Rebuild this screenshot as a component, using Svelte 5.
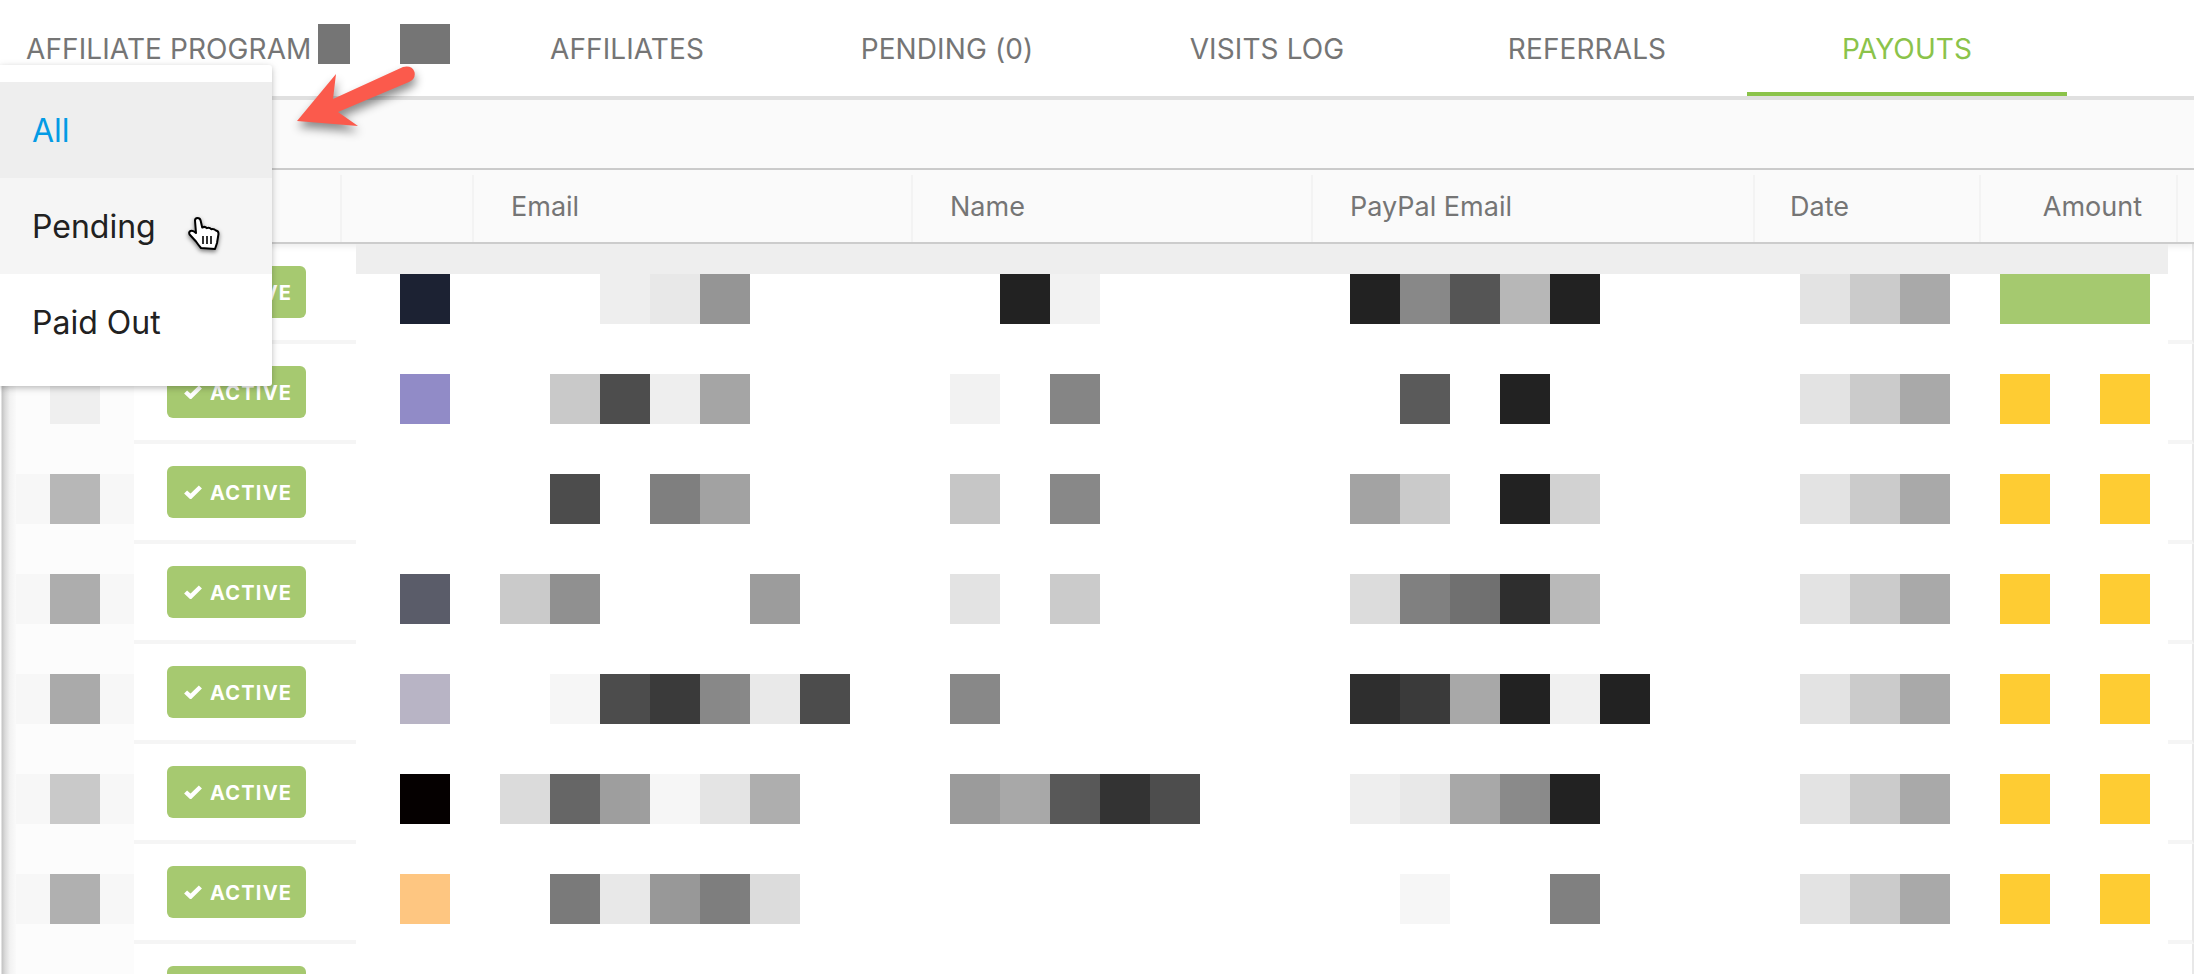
<script>
	const tabs = ['Affiliates', 'Pending (0)', 'Visits Log', 'Referrals', 'Payouts'];
	const columns = [
		{ label: '', width: 342 },
		{ label: '', width: 132 },
		{ label: 'Email', width: 439 },
		{ label: 'Name', width: 400 },
		{ label: 'PayPal Email', width: 442 },
		{ label: 'Date', width: 226, pad: 35 },
		{ label: 'Amount', width: 197, right: true }
	];
	const menu = ['All', 'Pending', 'Paid Out'];

	// redacted cells, keyed by their x on the page
	const rows = [
		{
			left: '#ffffff',
			paid: true,
			cells: {
				400: '#1c2233', 600: '#eeeeee', 650: '#e8e8e8', 700: '#959595',
				1000: '#222222', 1050: '#f2f2f2',
				1350: '#222222', 1400: '#888888', 1450: '#555555', 1500: '#b7b7b7', 1550: '#222222'
			}
		},
		{
			left: '#efefef',
			plain: true,
			cells: {
				400: '#918bc7', 550: '#c9c9c9', 600: '#4d4d4d', 650: '#eeeeee', 700: '#a5a5a5',
				950: '#f2f2f2', 1050: '#858585',
				1400: '#5a5a5a', 1500: '#222222'
			}
		},
		{
			left: '#b7b7b7',
			cells: {
				550: '#4c4c4c', 650: '#7f7f7f', 700: '#a2a2a2',
				950: '#c6c6c6', 1050: '#888888',
				1350: '#a3a3a3', 1400: '#cacaca', 1500: '#222222', 1550: '#d2d2d2'
			}
		},
		{
			left: '#adadad',
			cells: {
				400: '#5a5c69', 500: '#cacaca', 550: '#909090', 750: '#9c9c9c',
				950: '#e3e3e3', 1050: '#cbcbcb',
				1350: '#dcdcdc', 1400: '#808080', 1450: '#707070', 1500: '#2e2e2e', 1550: '#b9b9b9'
			}
		},
		{
			left: '#aaaaaa',
			cells: {
				400: '#b8b4c5', 550: '#f6f6f6', 600: '#4c4c4c', 650: '#3a3a3a', 700: '#888888', 750: '#e9e9e9', 800: '#4c4c4c',
				950: '#888888',
				1350: '#2e2e2e', 1400: '#3a3a3a', 1450: '#a8a8a8', 1500: '#222222', 1550: '#f0f0f0', 1600: '#222222'
			}
		},
		{
			left: '#c9c9c9',
			cells: {
				400: '#050000', 500: '#dbdbdb', 550: '#666666', 600: '#9e9e9e', 650: '#f6f6f6', 700: '#e4e4e4', 750: '#aeaeae',
				950: '#9b9b9b', 1000: '#a8a8a8', 1050: '#585858', 1100: '#333333', 1150: '#4d4d4d',
				1350: '#eeeeee', 1400: '#e8e8e8', 1450: '#a8a8a8', 1500: '#8a8a8a', 1550: '#222222'
			}
		},
		{
			left: '#b0b0b0',
			cells: {
				400: '#fec681', 550: '#7a7a7a', 600: '#e8e8e8', 650: '#989898', 700: '#7e7e7e', 750: '#dcdcdc',
				1400: '#f6f6f6', 1550: '#808080'
			}
		},
		{ left: '#ffffff', empty: true, cells: {} }
	];

	const dates = { 1800: '#e3e3e3', 1850: '#cbcbcb', 1900: '#a9a9a9' };
	const paid = { 2000: '#a5c96f', 2050: '#a5c96f', 2100: '#a5c96f' };
	const unpaid = { 2000: '#fecc33', 2100: '#fecc33' };

	function cellsOf(row) {
		if (row.empty) return [];
		const all = { ...row.cells, ...dates, ...(row.paid ? paid : unpaid) };
		return Object.entries(all).map(([x, color]) => ({ col: (x - 400) / 50 + 1, color }));
	}
</script>

<div class="page">
	<nav class="tabbar">
		<div class="title">
			<span>Affiliate Program</span>
			<i class="chip small"></i>
			<i class="chip wide"></i>
		</div>
		{#each tabs as tab}
			<a class="tab" class:active={tab === 'Payouts'} href="#payouts">{tab}</a>
		{/each}
	</nav>

	<div class="toolbar"></div>

	<div class="thead">
		{#each columns as col}
			<div class="th" class:right={col.right} style="width: {col.width}px; padding-left: {col.pad ?? 37}px">
				{col.label}
			</div>
		{/each}
	</div>

	<div class="tbody">
		<div class="redact-bar"></div>
		{#each rows as row}
			<div class="row">
				<div class="left-col">
					{#if !row.empty}
						<div class="left-strip" class:plain={row.plain}>
							<i style="background: {row.left}"></i>
						</div>
					{/if}
				</div>
				<div class="status">
					<span class="badge">
						<svg width="18" height="14" viewBox="0 0 18 14" aria-hidden="true">
							<polyline points="1.6,7 6.6,11.6 16.4,2" fill="none" stroke="#fff" stroke-width="4.4" />
						</svg>
						<span class="badge-text">Active</span>
					</span>
				</div>
				<div class="blocks">
					{#each cellsOf(row) as cell}
						<i style="grid-column: {cell.col}; background: {cell.color}"></i>
					{/each}
				</div>
				<div class="row-end"></div>
			</div>
		{/each}
	</div>

	<ul class="menu">
		{#each menu as item, i}
			<li class:selected={i === 0} class:hover={i === 1}>{item}</li>
		{/each}
	</ul>

	<svg class="arrow" width="140" height="80" viewBox="290 60 140 80" aria-hidden="true">
		<path
			d="M297 121 L336 74 L333 99 L403 67 Q412 65 414.5 72 Q416 79 409 82 L338 112 L358 126 Z"
			fill="#fb5a4c"
		/>
	</svg>

	<svg class="cursor" width="34" height="36" viewBox="0 0 34 36" aria-hidden="true">
		<path
			d="M7 3.5 Q7 1 9.5 1 Q12 1 12.6 3.5 L14.2 10.5 Q17 9 18.8 11.2 Q21.4 10 23.2 12.2 Q26 11.6 28 13.6 Q30.6 14 30.5 17 L29 26 L27 32 L13 31 Q10 27.5 8 24.5 L1.6 17.5 Q0.4 15 2.6 14 Q5 13 8 16 Z"
			fill="#fff"
			stroke="#000"
			stroke-width="2"
			stroke-linejoin="round"
		/>
		<path d="M15 19 V27 M19 19 V27 M23 19 V27" stroke="#000" stroke-width="1.6" />
	</svg>
</div>

<style>
	:global(body) {
		background: #fff;
		overflow: hidden;
	}

	.page {
		position: relative;
		height: 100vh;
		overflow: hidden;
		font-family: Inter, 'Liberation Sans', sans-serif;
		background: linear-gradient(90deg, #fff 1px, #c4c4c4 2px, #dadada 5px, #f2f2f2 10px, #fafafa 16px);
	}

	.tabbar {
		display: flex;
		height: 96px;
		background: #fff;
		color: #757575;
		font-size: 28px;
		letter-spacing: 0.1px;
		text-transform: uppercase;
	}

	.title {
		display: flex;
		align-items: center;
		width: 467px;
		padding-left: 26px;
		box-sizing: border-box;
	}

	.title span {
		width: 285px;
		flex: none;
		padding-top: 2px;
		white-space: nowrap;
	}

	.chip {
		display: block;
		flex: none;
		height: 40px;
		margin-bottom: 8px;
		background: #757575;
	}

	.chip.small {
		width: 32px;
		margin-left: 7px;
	}

	.chip.wide {
		width: 50px;
		margin-left: 50px;
	}

	.tab {
		display: flex;
		align-items: center;
		justify-content: center;
		width: 320px;
		padding-top: 2px;
		box-sizing: border-box;
		color: inherit;
		text-decoration: none;
	}

	.tab.active {
		color: #8bc34a;
		border-bottom: 4px solid #8bc34a;
		padding-top: 6px;
	}

	.toolbar {
		height: 68px;
		background: #fafafa;
		border-top: 4px solid #e0e0e0;
		border-bottom: 2px solid #cccccc;
	}

	.thead {
		position: relative;
		z-index: 1;
		display: flex;
		height: 72px;
		background: #fafafa;
		border-bottom: 2px solid #cccccc;
		box-shadow: 0 3px 6px rgba(0, 0, 0, 0.07);
		color: #757575;
		font-size: 27px;
	}

	.th {
		display: flex;
		align-items: center;
		padding-bottom: 5px;
		box-sizing: border-box;
		border-right: 2px solid #f3f3f3;
		margin: 5px 0 0;
		white-space: nowrap;
	}

	.th.right {
		justify-content: flex-end;
		padding-right: 34px;
	}

	.tbody {
		position: relative;
	}

	.redact-bar {
		position: absolute;
		z-index: 2;
		top: 0;
		left: 356px;
		width: 1812px;
		height: 30px;
		background: #eeeeee;
	}

	.row {
		display: flex;
		height: 100px;
		padding-left: 16px;
	}

	.left-col {
		width: 118px;
		background: #fcfcfc;
	}

	.left-strip {
		display: flex;
		justify-content: center;
		margin-top: 30px;
		height: 50px;
		background: #f7f7f7;
	}

	.left-strip.plain {
		background: transparent;
	}

	.left-strip i {
		display: block;
		width: 50px;
	}

	.status {
		width: 222px;
		padding: 22px 0 0 33px;
		box-sizing: border-box;
		background: #fff;
		border-bottom: 4px solid #f5f5f5;
	}

	.badge {
		display: flex;
		align-items: center;
		gap: 8px;
		width: 139px;
		height: 52px;
		padding-left: 17px;
		box-sizing: border-box;
		border-radius: 6px;
		background: #a6c970;
		color: #fff;
		font-size: 20px;
		font-weight: 700;
		letter-spacing: 1.2px;
		text-transform: uppercase;
	}

	.badge-text {
		padding-top: 2px;
	}

	.blocks {
		display: grid;
		grid-template-columns: repeat(35, 50px);
		grid-auto-rows: 50px;
		align-content: start;
		width: 1812px;
		padding: 30px 0 0 44px;
		box-sizing: border-box;
		background: #fff;
	}

	.blocks i {
		display: block;
		grid-row: 1;
	}

	.row-end {
		width: 24px;
		background: #fff;
		border-bottom: 4px solid #f5f5f5;
		border-right: 2px solid #e8e8e8;
	}

	.menu {
		position: absolute;
		z-index: 3;
		top: 65px;
		left: 0;
		width: 272px;
		margin: 0;
		padding: 17px 0 16px;
		list-style: none;
		background: #fff;
		border-radius: 0 3px 3px 0;
		box-shadow: 0 2px 5px rgba(0, 0, 0, 0.16), 0 2px 10px rgba(0, 0, 0, 0.12);
		font-size: 32px;
		color: #212121;
	}

	.menu li {
		display: flex;
		align-items: center;
		height: 96px;
		padding-left: 32px;
	}

	.menu li.selected {
		background: #eeeeee;
		color: #039be5;
	}

	.menu li.hover {
		background: #f5f5f5;
	}

	.arrow {
		position: absolute;
		z-index: 4;
		top: 60px;
		left: 290px;
		overflow: visible;
		filter: drop-shadow(1px 6px 5px rgba(0, 0, 0, 0.45));
	}

	.cursor {
		position: absolute;
		z-index: 4;
		top: 217px;
		left: 188px;
		filter: drop-shadow(0 2px 2px rgba(0, 0, 0, 0.5));
	}
</style>
